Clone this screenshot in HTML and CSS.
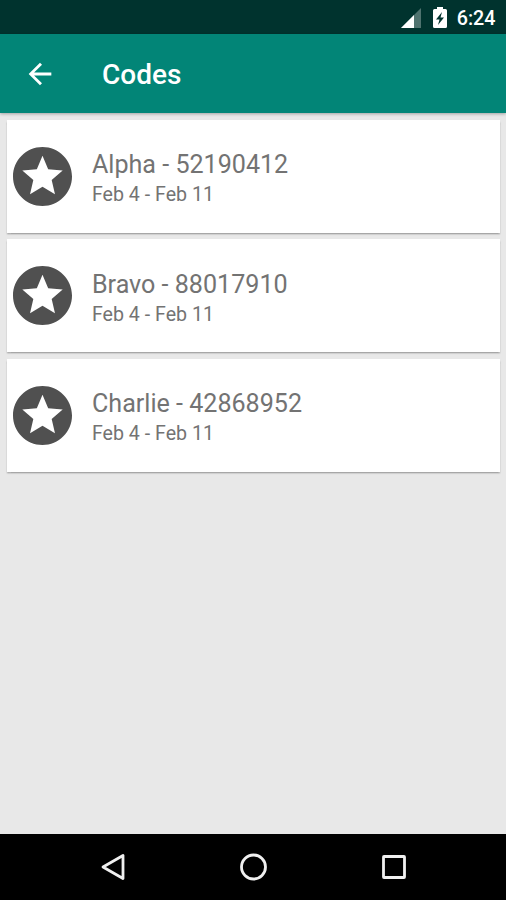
FILE: index.html
```html
<!DOCTYPE html>
<html lang="en">
<head>
  <meta charset="UTF-8" />
  <meta name="viewport" content="width=device-width, initial-scale=1.0" />
  <title>Codes</title>
  <link rel="stylesheet" href="styles.css">
</head>
<body>
  <!-- Status Bar -->
  <div class="status-bar">
    <svg class="signal" width="20" height="20" viewBox="0 0 20 20">
      <path d="M20 0V20H0z" fill="#4f736f" />
      <path d="M13 7V20H0z" fill="#fff" />
    </svg>
    <svg class="battery" width="14" height="21" viewBox="0 0 14 21">
      <path d="M4 0h6v2h2.5Q14 2 14 3.500V19.500Q14 21 12.500 21H1.500Q0 21 0 19.500V3.500Q0 2 1.500 2H4z" fill="#fff" />
      <path d="M9 5L3 12.500h3.500L5 18 11 10.500H7.500z" fill="#00332e" />
    </svg>
    <span class="clock">6:24</span>
  </div>

  <!-- Toolbar -->
  <header class="toolbar">
    <button class="back" aria-label="Back">
      <svg width="34" height="34" viewBox="0 0 24 24">
        <path d="M20 11H7.830l5.590-5.590L12 4l-8 8 8 8 1.410-1.410L7.830 13H20v-2z" fill="#fff" />
      </svg>
    </button>
    <h1>Codes</h1>
  </header>

  <!-- Code List -->
  <main class="list">
    <div class="card">
      <svg class="star" width="59" height="59" viewBox="2 2 20 20">
        <path d="M11.990 2C6.470 2 2 6.480 2 12s4.470 10 9.990 10C17.520 22 22 17.520 22 12S17.520 2 11.990 2zm4.240 16L12 15.450 7.770 18l1.120-4.810-3.730-3.230 4.920-.42L12 5l1.920 4.530 4.920.42-3.730 3.230L16.230 18z" />
      </svg>
      <div class="info">
        <h2>Alpha - 52190412</h2>
        <p>Feb 4 - Feb 11</p>
      </div>
    </div>
    <div class="card">
      <svg class="star" width="59" height="59" viewBox="2 2 20 20">
        <path d="M11.990 2C6.470 2 2 6.480 2 12s4.470 10 9.990 10C17.520 22 22 17.520 22 12S17.520 2 11.990 2zm4.240 16L12 15.450 7.770 18l1.120-4.810-3.730-3.230 4.920-.42L12 5l1.920 4.530 4.920.42-3.730 3.230L16.230 18z" />
      </svg>
      <div class="info">
        <h2>Bravo - 88017910</h2>
        <p>Feb 4 - Feb 11</p>
      </div>
    </div>
    <div class="card">
      <svg class="star" width="59" height="59" viewBox="2 2 20 20">
        <path d="M11.990 2C6.470 2 2 6.480 2 12s4.470 10 9.990 10C17.520 22 22 17.520 22 12S17.520 2 11.990 2zm4.240 16L12 15.450 7.770 18l1.120-4.810-3.730-3.230 4.920-.42L12 5l1.920 4.530 4.920.42-3.730 3.230L16.230 18z" />
      </svg>
      <div class="info">
        <h2>Charlie - 42868952</h2>
        <p>Feb 4 - Feb 11</p>
      </div>
    </div>
  </main>

  <!-- Navigation Bar -->
  <nav class="nav-bar">
    <svg width="30" height="30" viewBox="0 0 30 30">
      <path d="M25 3.500V26.500L5 15z" />
    </svg>
    <svg width="30" height="30" viewBox="0 0 30 30">
      <circle cx="15.500" cy="15" r="12" />
    </svg>
    <svg width="30" height="30" viewBox="0 0 30 30">
      <rect x="4.500" y="4.500" width="21" height="21" rx="0.500" />
    </svg>
  </nav>
</body>
</html>
```
FILE: styles.css
```css
* {
  box-sizing: border-box;
  margin: 0;
  padding: 0;
}
body {
  display: flex;
  flex-direction: column;
  height: 100vh;
  overflow: hidden;
  background: #e8e8e8;
  font-family: Roboto, "Liberation Sans", sans-serif;
}

/* Status Bar */
.status-bar {
  display: flex;
  justify-content: flex-end;
  align-items: center;
  height: 34px;
  padding: 1px 10.5px 0 0;
  background: #00332e;
  color: #fff;
}
.battery {
  margin: 0 10px 0 12px;
}
.clock {
  padding-top: 1px;
  font-size: 19.7px;
  font-weight: 500;
}

/* Toolbar */
.toolbar {
  display: flex;
  align-items: center;
  height: 78.5px;
  padding-left: 23px;
  background: #028577;
  color: #fff;
  box-shadow: 0 1px 3px rgba(0, 0, 0, 0.3);
}
.back {
  display: flex;
  margin-right: 45px;
  padding-top: 1px;
  border: none;
  background: none;
}
.toolbar h1 {
  padding-top: 2px;
  font-size: 28px;
  font-weight: 500;
}

/* Code List */
.list {
  flex: 1;
  display: flex;
  flex-direction: column;
  gap: 6.5px;
  padding: 7.3px 6px 0 7.4px;
}
.card {
  display: flex;
  align-items: center;
  height: 113px;
  padding-left: 5.6px;
  background: #fff;
  box-shadow: 0 1.5px 1.5px rgba(0, 0, 0, 0.28);
}
.star {
  margin-right: 20px;
  fill: #505050;
}
.info {
  padding-top: 6.6px;
  color: #737373;
}
.info h2 {
  font-size: 25.1px;
  font-weight: 400;
  line-height: 30px;
}
.info p {
  font-size: 19.6px;
  line-height: 29px;
}

/* Navigation Bar */
.nav-bar {
  display: flex;
  justify-content: center;
  align-items: center;
  gap: 110.5px;
  height: 66.5px;
  background: #000;
}
.nav-bar svg {
  fill: none;
  stroke: #f0f0f0;
  stroke-width: 2.8;
  stroke-linejoin: round;
}
```
